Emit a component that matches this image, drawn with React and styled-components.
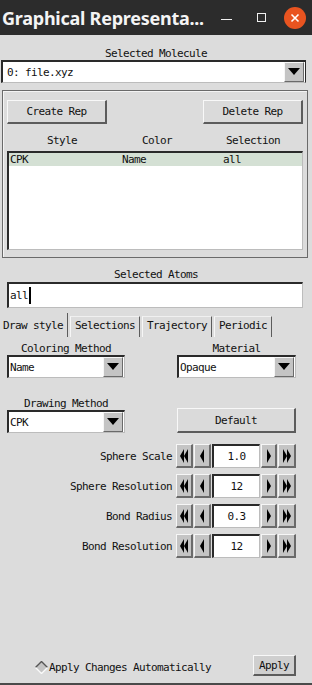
import React from 'react';
import styled, { createGlobalStyle } from 'styled-components';

const GlobalStyle = createGlobalStyle`
  html, body {
    margin: 0;
    padding: 0;
    background: #dcdcdc;
  }
  #root {
    width: 312px;
    height: 685px;
    overflow: hidden;
  }
`;

const Window = styled.div`
  width: 312px;
  height: 685px;
  display: flex;
  flex-direction: column;
  font-family: "DejaVu Sans Mono", "Liberation Mono", monospace;
  font-size: 11px;
  letter-spacing: -0.62px;
  color: #111;
`;

const TitleBar = styled.div`
  height: 35px;
  flex-shrink: 0;
  background: #2c2c2c;
  display: flex;
  align-items: center;
  padding-left: 2px;
`;

const TitleText = styled.div`
  flex: 1;
  font-family: "Noto Sans", "Open Sans", sans-serif;
  font-weight: 700;
  font-size: 18px;
  letter-spacing: -0.25px;
  color: #f4f4f4;
  white-space: nowrap;
`;

const TitleButton = styled.div`
  width: 34px;
  height: 35px;
  display: flex;
  align-items: center;
  justify-content: center;
`;

const Body = styled.div`
  flex: 1;
  display: flex;
  flex-direction: column;
  background: #dcdcdc;
  border-bottom: 2px solid #4a4a4a;
`;

const Label = styled.div`
  height: 13px;
  line-height: 13px;
  text-align: center;
  white-space: nowrap;
  margin-top: ${(p) => p.$top || 0}px;
`;

const Sunken = styled.div`
  background: #fff;
  border-style: solid;
  border-width: 2px 1px 1px 2px;
  border-color: #2a2a2a #bcbcbc #bcbcbc #2a2a2a;
  box-sizing: border-box;
`;

const Dropdown = styled(Sunken)`
  display: flex;
  align-items: center;
  height: ${(p) => p.$h || 23}px;
  width: ${(p) => p.$w}px;
  margin-left: ${(p) => p.$left || 0}px;
  padding-left: ${(p) => p.$pad || 1}px;
  border-right-color: ${(p) => (p.$darkRight ? '#2a2a2a' : '#bcbcbc')};
  white-space: nowrap;
`;

const DropText = styled.span`
  flex: 1;
  line-height: 13px;
`;

const ArrowBox = styled.div`
  width: 18px;
  height: 18px;
  margin-right: 1px;
  background: #c4c4c4;
  border-style: solid;
  border-width: 1px;
  border-color: #f6f6f6 #6a6a6a #6a6a6a #f6f6f6;
  display: flex;
  align-items: center;
  justify-content: center;
`;

const Frame = styled.div`
  margin: 7px 4px 0 2px;
  height: 168px;
  box-sizing: border-box;
  border: 1px solid #6a6a6a;
  box-shadow: inset 1px 1px 0 #f4f4f4;
  padding: 9px 4px 0 4px;
  display: flex;
  flex-direction: column;
`;

const ButtonRow = styled.div`
  display: flex;
  justify-content: space-between;
`;

const Button = styled.button`
  font: inherit;
  letter-spacing: inherit;
  color: #111;
  width: ${(p) => p.$w}px;
  height: ${(p) => p.$h || 24}px;
  background: ${(p) => p.$bg || '#dadada'};
  border-style: solid;
  border-width: 1px 2px 2px 1px;
  border-color: #f8f8f8 #5c5c5c #5c5c5c #f8f8f8;
  padding: 0;
  margin: 0;
  box-sizing: border-box;
  cursor: default;
`;

const HeaderRow = styled.div`
  display: grid;
  grid-template-columns: 116px 74px 118px;
  margin-top: 10px;
  height: 13px;
  line-height: 13px;
  text-align: center;
  margin-left: -3px;
`;

const ListBox = styled(Sunken)`
  margin-top: 4px;
  height: 99px;
  width: 296px;
`;

const ListRow = styled.div`
  display: grid;
  grid-template-columns: 112px 101px 1fr;
  height: 13px;
  line-height: 13px;
  padding-left: 1px;
  background: ${(p) => (p.$selected ? '#d4e0d4' : 'transparent')};
`;

const Entry = styled(Sunken)`
  margin: 1px 0 0 7px;
  width: 296px;
  height: 26px;
  display: flex;
  align-items: center;
  padding-left: 1px;
`;

const Cursor = styled.span`
  display: inline-block;
  width: 2px;
  height: 17px;
  background: #000;
  margin-left: 1px;
`;

const TabBar = styled.div`
  margin-top: 2px;
  height: 27px;
  display: flex;
  align-items: flex-end;
`;

const Tab = styled.div`
  height: ${(p) => (p.$active ? 24 : 21)}px;
  box-sizing: border-box;
  margin-left: ${(p) => (p.$active ? 0 : 2)}px;
  padding: 0 4px 5px ${(p) => (p.$active ? 3 : 4)}px;
  border-right: 1px solid #5c5c5c;
  border-left: ${(p) => (p.$active ? 'none' : '1px solid #f6f6f6')};
  border-top: ${(p) => (p.$active ? 'none' : '1px solid #f0f0f0')};
  display: flex;
  align-items: flex-end;
  line-height: 13px;
  white-space: nowrap;
`;

const Pair = styled.div`
  display: flex;
  justify-content: space-between;
  padding: 0 16px 0 7px;
  margin-top: ${(p) => p.$top || 0}px;
`;

const Column = styled.div`
  width: ${(p) => p.$w}px;
  display: flex;
  flex-direction: column;
  justify-content: flex-end;
`;

const SpinList = styled.div`
  margin-top: 11px;
  display: flex;
  flex-direction: column;
  gap: 6px;
  padding-right: 16px;
`;

const SpinRow = styled.div`
  display: flex;
  justify-content: flex-end;
  align-items: center;
  height: 24px;
  gap: 1px;
`;

const SpinLabel = styled.span`
  margin-right: 3px;
  white-space: nowrap;
`;

const ArrowButton = styled.div`
  width: ${(p) => p.$w}px;
  height: 24px;
  box-sizing: border-box;
  background: #c4c4c4;
  border-style: solid;
  border-width: 1px 2px 2px 1px;
  border-color: #f6f6f6 #6a6a6a #6a6a6a #f6f6f6;
  display: flex;
  align-items: center;
  justify-content: center;
`;

const SpinEntry = styled(Sunken)`
  width: 48px;
  height: 24px;
  display: flex;
  align-items: center;
  justify-content: center;
`;

const Footer = styled.div`
  margin-top: auto;
  display: flex;
  align-items: center;
  justify-content: space-between;
  padding: 0 16px 7px 35px;
`;

const Check = styled.div`
  display: flex;
  align-items: center;
  gap: 1px;
  margin-top: 3px;
`;

const DownArrow = () => (
  <svg width="12" height="8" viewBox="0 0 12 8">
    <polygon points="0,0 12,0 6,7" fill="#000" />
  </svg>
);

const Arrows = ({ dir, double }) => (
  <svg width="9" height="14" viewBox="0 0 9 14">
    <g transform={dir === 'right' ? 'translate(9,0) scale(-1,1)' : undefined}>
      {double ? (
        <>
          <polygon points="0,7 4,0 4,14" fill="#000" />
          <polygon points="4,7 8,0 8,14" fill="#000" />
        </>
      ) : (
        <polygon points="2,7 6,0 6,14" fill="#000" />
      )}
    </g>
  </svg>
);

const Spinner = ({ label, value }) => (
  <SpinRow>
    <SpinLabel>{label}</SpinLabel>
    <ArrowButton $w={17}><Arrows double /></ArrowButton>
    <ArrowButton $w={17}><Arrows /></ArrowButton>
    <SpinEntry>{value}</SpinEntry>
    <ArrowButton $w={16}><Arrows dir="right" /></ArrowButton>
    <ArrowButton $w={18}><Arrows dir="right" double /></ArrowButton>
  </SpinRow>
);

export default function App() {
  return (
    <Window>
      <GlobalStyle />
      <TitleBar>
        <TitleText>Graphical Representa...</TitleText>
        <TitleButton>
          <svg width="12" height="12" viewBox="0 0 12 12">
            <line x1="0" y1="7.5" x2="11" y2="7.5" stroke="#f0f0f0" strokeWidth="1" />
          </svg>
        </TitleButton>
        <TitleButton>
          <svg width="11" height="11" viewBox="0 0 11 11">
            <rect x="1.5" y="1.5" width="8" height="8" fill="none" stroke="#f0f0f0" strokeWidth="1" />
          </svg>
        </TitleButton>
        <TitleButton>
          <svg width="22" height="22" viewBox="0 0 22 22">
            <circle cx="11" cy="11" r="11" fill="#e95420" />
            <path d="M7.5 7.5 L14.5 14.5 M14.5 7.5 L7.5 14.5" stroke="#fff" strokeWidth="1.6" />
          </svg>
        </TitleButton>
      </TitleBar>
      <Body>
        <Label $top={12}>Selected Molecule</Label>
        <Dropdown $w={305} $left={1} $pad={4} $darkRight>
          <DropText>0: file.xyz</DropText>
          <ArrowBox><DownArrow /></ArrowBox>
        </Dropdown>

        <Frame>
          <ButtonRow>
            <Button $w={100}>Create Rep</Button>
            <Button $w={100}>Delete Rep</Button>
          </ButtonRow>
          <HeaderRow>
            <span>Style</span>
            <span>Color</span>
            <span>Selection</span>
          </HeaderRow>
          <ListBox>
            <ListRow $selected>
              <span>CPK</span>
              <span>Name</span>
              <span>all</span>
            </ListRow>
          </ListBox>
        </Frame>

        <Label $top={10}>Selected Atoms</Label>
        <Entry>
          all<Cursor />
        </Entry>

        <TabBar>
          <Tab $active>Draw style</Tab>
          <Tab>Selections</Tab>
          <Tab>Trajectory</Tab>
          <Tab>Periodic</Tab>
        </TabBar>

        <Pair $top={5}>
          <Column $w={118}>
            <Label>Coloring Method</Label>
            <Dropdown $w={118} $h={23}>
              <DropText>Name</DropText>
              <ArrowBox><DownArrow /></ArrowBox>
            </Dropdown>
          </Column>
          <Column $w={119}>
            <Label>Material</Label>
            <Dropdown $w={119} $h={23}>
              <DropText>Opaque</DropText>
              <ArrowBox><DownArrow /></ArrowBox>
            </Dropdown>
          </Column>
        </Pair>

        <Pair $top={19}>
          <Column $w={118}>
            <Label>Drawing Method</Label>
            <Dropdown $w={118} $h={23}>
              <DropText>CPK</DropText>
              <ArrowBox><DownArrow /></ArrowBox>
            </Dropdown>
          </Column>
          <Column $w={119}>
            <Button $w={119} $h={25}>Default</Button>
          </Column>
        </Pair>

        <SpinList>
          <Spinner label="Sphere Scale" value="1.0" />
          <Spinner label="Sphere Resolution" value="12" />
          <Spinner label="Bond Radius" value="0.3" />
          <Spinner label="Bond Resolution" value="12" />
        </SpinList>

        <Footer>
          <Check>
            <svg width="13" height="13" viewBox="0 0 13 13">
              <polygon points="6.5,0.5 12.5,6.5 6.5,12.5 0.5,6.5" fill="#c4c4c4" />
              <polyline points="0.5,6.5 6.5,0.5 12.5,6.5" fill="none" stroke="#555" strokeWidth="1.4" />
              <polyline points="12.5,6.5 6.5,12.5 0.5,6.5" fill="none" stroke="#fafafa" strokeWidth="1.4" />
            </svg>
            <span>Apply Changes Automatically</span>
          </Check>
          <Button $w={43} $h={21} $bg="#cfcfcf">Apply</Button>
        </Footer>
      </Body>
    </Window>
  );
}
